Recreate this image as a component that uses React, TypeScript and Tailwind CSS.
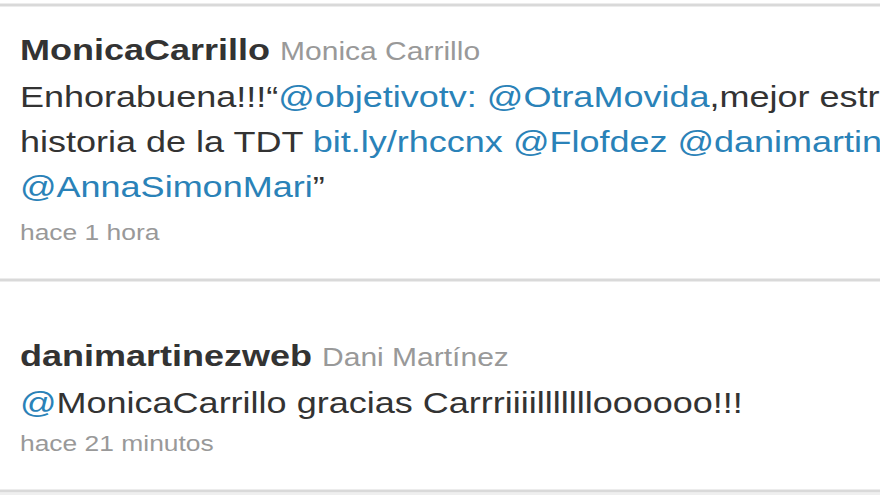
const link = "text-[#2a82b8]";

function Band({ className = "" }: { className?: string }) {
  return <div className={`h-[4px] border-y border-[#ececec] bg-[#d9d9d9] ${className}`} />;
}

function Tweet({
  user,
  name,
  lines,
  time,
  pad,
  timeGap,
}: {
  user: string;
  name: string;
  lines: React.ReactNode[];
  time: string;
  pad: string;
  timeGap: string;
}) {
  return (
    <div className={`pl-[20px] ${pad}`}>
      <div className="origin-left scale-x-[1.2] whitespace-nowrap">
        <div className="text-[30px] leading-[46px]">
          <span className="font-bold text-[#333]">{user}</span>{" "}
          <span className="text-[25px] text-[#999]">{name}</span>
        </div>
        {lines.map((l, i) => (
          <div key={i} className="text-[30px] leading-[45px] text-[#333]">
            {l}
          </div>
        ))}
        <div className={`${timeGap} text-[22px] leading-[30px] text-[#999]`}>{time}</div>
      </div>
    </div>
  );
}

export default function App() {
  return (
    <div className="h-[495px] w-[880px] overflow-hidden bg-white font-['Liberation_Sans',Arial,sans-serif]">
      <div className="pt-[3px]">
        <Band />
      </div>
      <Tweet
        pad="pt-[20px] pb-[30px]"
        timeGap="mt-[9px]"
        user="MonicaCarrillo"
        name="Monica Carrillo"
        lines={[
          <>
            Enhorabuena!!!“<span className={link}>@objetivotv:</span>{" "}
            <span className={link}>@OtraMovida</span>,mejor estreno de la
          </>,
          <>
            historia de la TDT <span className={link}>bit.ly/rhccnx</span>{" "}
            <span className={link}>@Flofdez</span>{" "}
            <span className={link}>@danimartinezweb</span>
          </>,
          <>
            <span className={link}>@AnnaSimonMari</span>”
          </>,
        ]}
        time="hace 1 hora"
      />
      <Band />
      <Tweet
        pad="pt-[51px] pb-[30px]"
        timeGap="mt-[4px]"
        user="danimartinezweb"
        name="Dani Martínez"
        lines={[
          <>
            <span className={link}>@</span>MonicaCarrillo gracias Carrriiiillllllloooooo!!!
          </>,
        ]}
        time="hace 21 minutos"
      />
      <Band />
      <div className="h-[8px] bg-[#efefef]" />
    </div>
  );
}
